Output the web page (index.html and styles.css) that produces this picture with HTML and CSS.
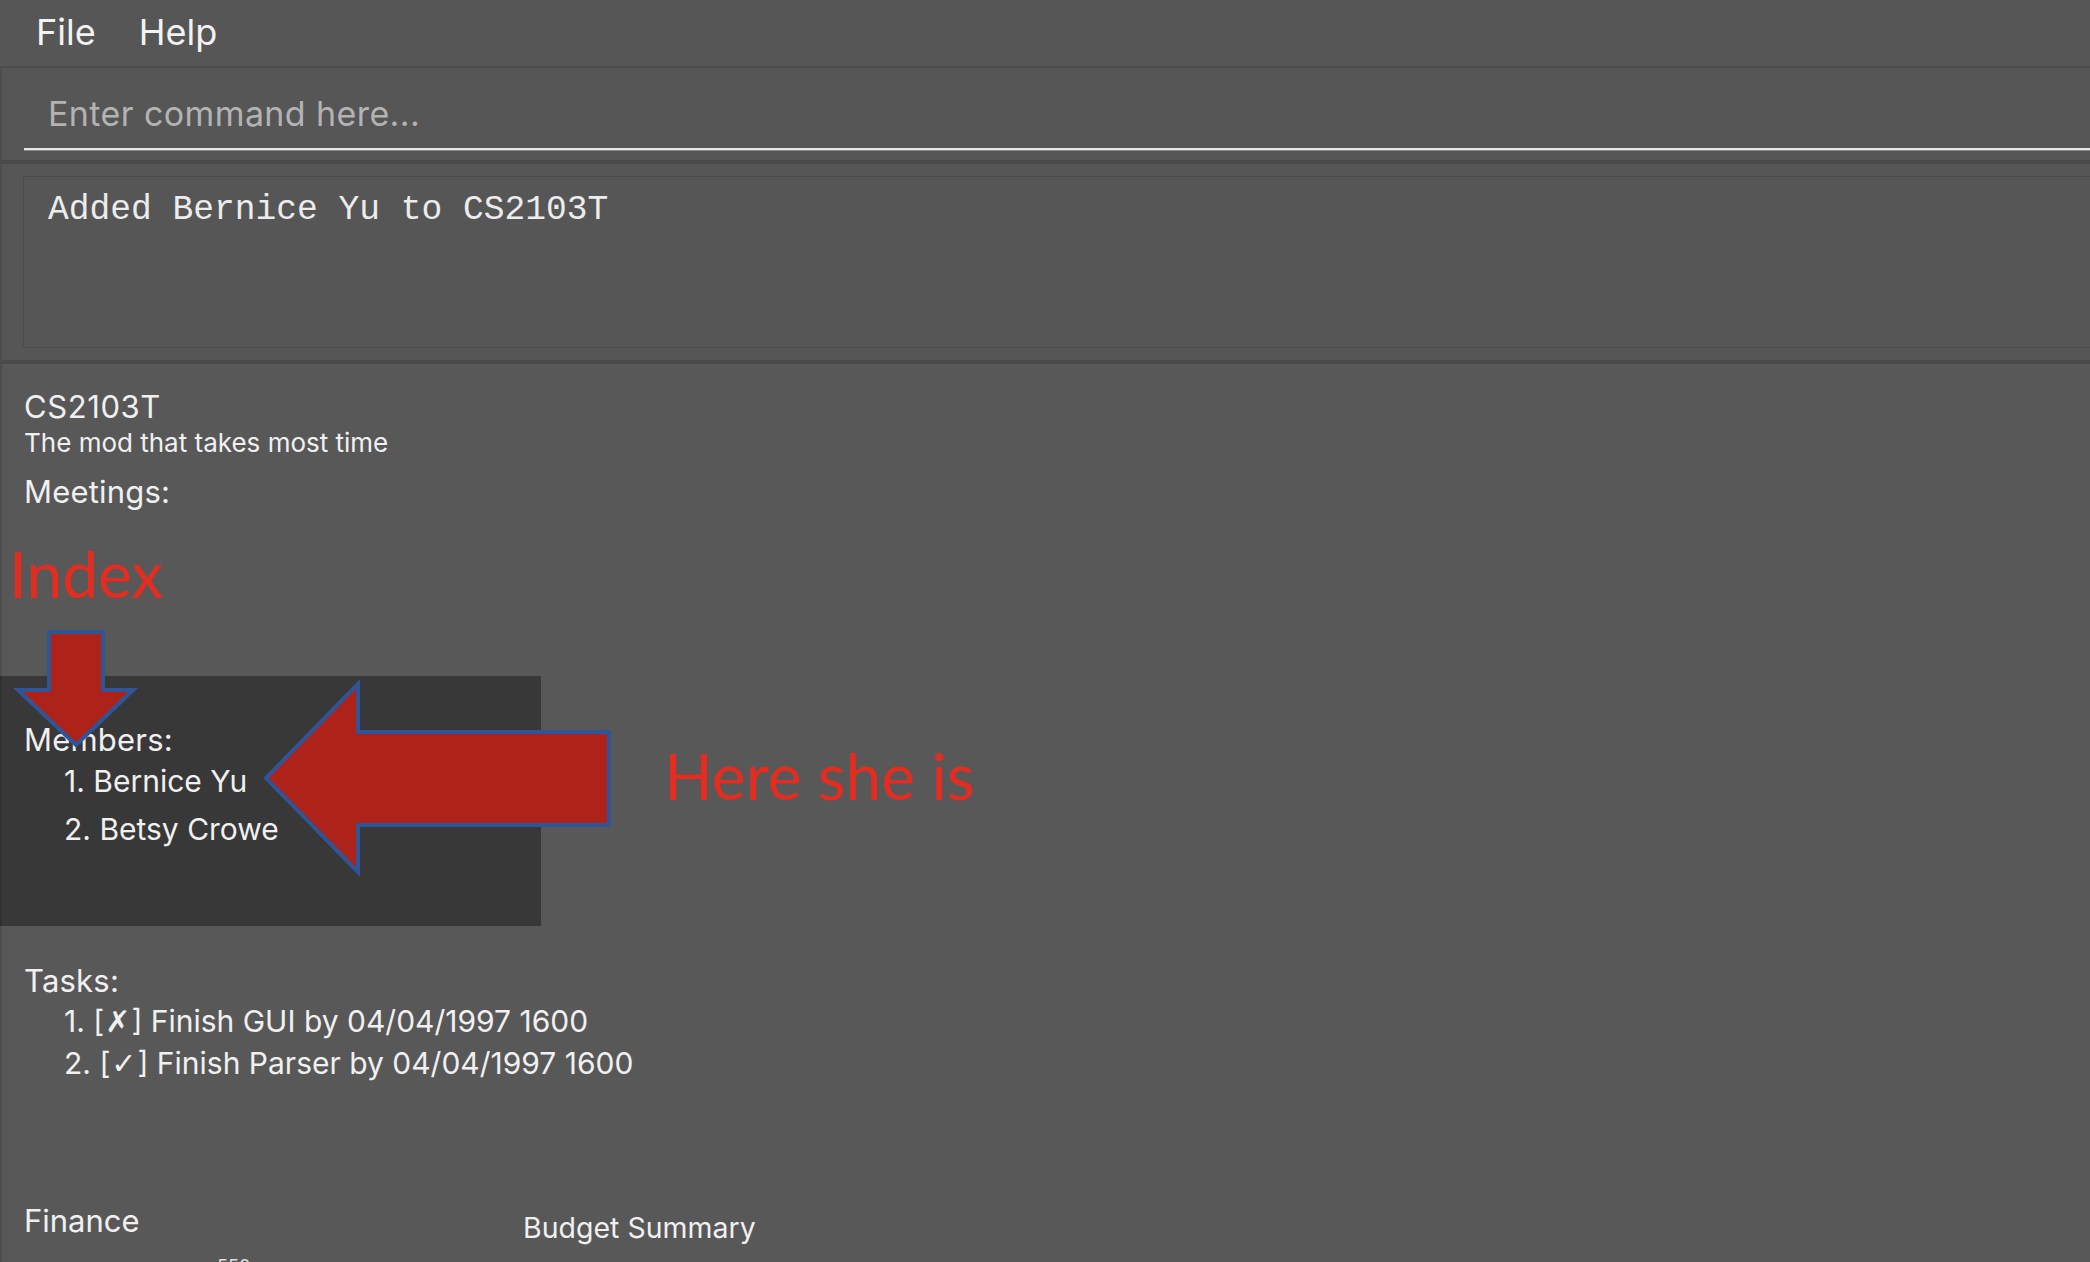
FILE: index.html
```html
<!DOCTYPE html>
<html lang="en">
<head>
<meta charset="utf-8">
<title>Mod Manager</title>
<link rel="stylesheet" href="styles.css">
</head>
<body>
<div class="app">
  <nav class="menubar">
    <span class="menu-item">File</span>
    <span class="menu-item">Help</span>
  </nav>

  <div class="command-box">
    <div class="command-field">Enter command here...</div>
  </div>

  <div class="result-box">
    <div class="result-display">Added Bernice Yu to CS2103T</div>
  </div>

  <main class="detail">
    <div class="group-name">CS2103T</div>
    <div class="group-desc">The mod that takes most time</div>
    <div class="section-title">Meetings:</div>
    <div class="meetings-list"></div>

    <section class="members-card">
      <div class="section-title tight">Members:</div>
      <ol class="members-list">
        <li>1. Bernice Yu</li>
        <li>2. Betsy Crowe</li>
      </ol>
    </section>

    <section class="tasks">
      <div class="section-title tight">Tasks:</div>
      <ol class="tasks-list">
        <li>1. [<span class="mark cross">✗</span>] Finish GUI by 04/04/1997 1600</li>
        <li>2. [<span class="mark">✓</span>] Finish Parser by 04/04/1997 1600</li>
      </ol>
    </section>

    <section class="finance">
      <div class="finance-head">
        <div class="finance-title">Finance</div>
        <div class="chart-title">Budget Summary</div>
      </div>
      <div class="chart-axis">550</div>
    </section>
  </main>

  <div class="note note-index">Index</div>
  <div class="note note-here">Here she is</div>
  <svg class="arrows" width="700" height="950" viewBox="0 0 700 950" aria-hidden="true">
    <path class="arrow" d="M49,632 H103 V690 H133 L76,745 L18,690 H49 Z"/>
    <path class="arrow" d="M266,778 L358,684 V732 H609 V825 H358 V872 Z"/>
  </svg>
</div>
</body>
</html>
```
FILE: styles.css
```css
* { box-sizing: border-box; }

html, body {
  margin: 0;
  padding: 0;
  background: #575757;
  overflow: hidden;
}

.app {
  position: relative;
  height: 1262px;
  overflow: hidden;
  font-family: Inter, "Noto Sans", sans-serif;
  color: #f0f0f0;
}

/* Menu bar */
.menubar {
  display: flex;
  height: 68px;
  padding-left: 36px;
  background: #565656;
  border-bottom: 2px solid #4c4c4c;
}
.menu-item {
  font-size: 36px;
  line-height: 64px;
  margin-right: 43px;
  color: #f2f2f2;
}

/* Command box */
.command-box {
  padding: 26px 0 10px 22px;
  border-left: 2px solid #4d4d4d;
  border-bottom: 4px solid #4a4a4a;
  background: #565656;
}
.command-field {
  font-size: 34px;
  letter-spacing: 0.4px;
  line-height: 40px;
  padding: 0 0 14px 24px;
  color: #b3b3b3;
  border-bottom: 2px solid #e6e6e6;
  box-shadow: 0 1px 0 #8a8a8a;
}

/* Result display */
.result-box {
  padding: 12px 0 12px 21px;
  border-left: 2px solid #4d4d4d;
  border-bottom: 4px solid #4a4a4a;
  background: #565656;
}
.result-display {
  height: 172px;
  border: 1px solid #4c4c4c;
  border-right: none;
  padding: 13px 0 0 24px;
  font-family: "Liberation Mono", "DejaVu Sans Mono", monospace;
  font-size: 34.6px;
  line-height: 40px;
  color: #ececec;
}

/* Group detail */
.detail {
  padding: 25px 0 0 22px;
  border-left: 2px solid #4d4d4d;
  background: #585858;
  min-height: 900px;
}
.group-name {
  font-size: 31px;
  letter-spacing: 0.6px;
  line-height: 36px;
}
.group-desc {
  margin-top: 2px;
  font-size: 26px;
  line-height: 32px;
}
.section-title {
  margin-top: 14px;
  font-size: 31px;
  letter-spacing: 0.2px;
  line-height: 38px;
}
.section-title.tight {
  margin-top: 0;
  line-height: 34px;
}
.meetings-list {
  height: 165px;
}

.members-card {
  margin-left: -24px;
  width: 541px;
  padding: 47px 0 73px 22px;
  background: #383838;
  border-left: 2px solid #303030;
}
.members-list,
.tasks-list {
  list-style: none;
  margin: 0;
  padding: 0 0 0 40px;
  font-size: 30px;
}
.members-list li { line-height: 48px; }

.tasks {
  margin-top: 38px;
}
.tasks-list { margin-top: 2px; }
.tasks-list li {
  height: 42px;
  line-height: 42px;
}
.mark {
  display: inline-block;
  font-family: "DejaVu Sans", sans-serif;
  font-size: 30px;
  line-height: 30px;
  margin: 0 1px;
}
.mark.cross {
  font-weight: bold;
}

.finance {
  margin-top: 119px;
}
.finance-head {
  display: flex;
  align-items: flex-start;
}
.finance-title {
  width: 499px;
  font-size: 31px;
  line-height: 36px;
}
.chart-title {
  margin-top: 8px;
  font-size: 28.5px;
  line-height: 34px;
}
.chart-axis {
  margin: 12px 0 0 193px;
  font-size: 18px;
  line-height: 20px;
  color: #e0e0e0;
}

/* Annotations over the screenshot */
.note {
  position: absolute;
  font-family: Lato, "Open Sans", sans-serif;
  font-size: 64px;
  line-height: 64px;
  color: #e42d20;
  white-space: nowrap;
}
.note-index { left: 9px; top: 542px; }
.note-here { left: 664px; top: 744px; }

.arrows {
  position: absolute;
  left: 0;
  top: 0;
  pointer-events: none;
}
.arrow {
  fill: #ad2219;
  stroke: #2f5597;
  stroke-width: 4;
  stroke-linejoin: miter;
}
```
